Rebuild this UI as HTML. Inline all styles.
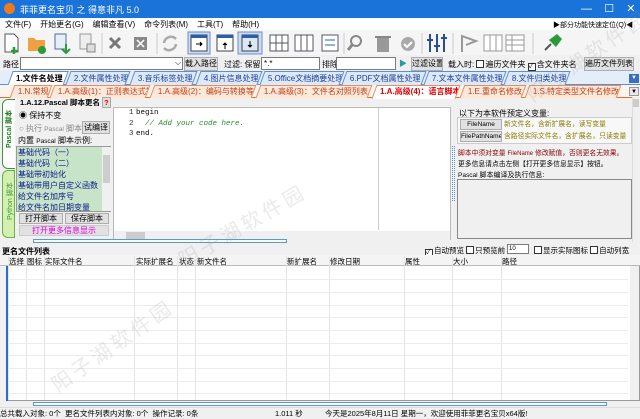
<!DOCTYPE html>
<html><head><meta charset="utf-8">
<style>
*{margin:0;padding:0;box-sizing:border-box}
body{width:640px;height:419px;overflow:hidden;background:#f0f0f0;font-family:"Liberation Sans","Noto Sans CJK SC",sans-serif;font-size:8px;color:#000;position:relative}
div,span{white-space:nowrap}
.a{position:absolute;white-space:nowrap}
.btn{position:absolute;background:#e1e1e1;border:1px solid #adadad;text-align:center;line-height:12px;font-size:8px;overflow:hidden}
.inp{position:absolute;background:#fff;border:1px solid #7a7a7a}
.cb{display:inline-block;width:8px;height:8px;border:1px solid #333;background:#fff;vertical-align:-1px;margin-right:1px;font-size:7px;line-height:6px}
.t1{position:absolute;top:71px;height:14px;border:1px solid #5a8fd0;border-bottom:none;background:#dbe9fb;color:#1f3f8f;font-size:8px;line-height:13px;padding-left:5px;transform:skewX(-20deg);overflow:hidden}
.t1 span{display:inline-block;transform:skewX(20deg)}
.t2{position:absolute;top:85px;height:13px;border:1px solid #e09060;border-bottom:none;background:#fde8dc;color:#c04010;font-size:8px;line-height:12px;padding-left:5px;transform:skewX(-20deg);overflow:hidden}
.t2 span{display:inline-block;transform:skewX(20deg)}
.vl{position:absolute;top:256px;width:1px;height:144px;background:#e4e4e4}
.hl{position:absolute;left:8px;width:620px;height:1px;background:#ececec}
</style></head><body>
<div class="a" style="left:0;top:0;width:640px;height:18px;background:#1a73d9"></div>
<div class="a" style="left:4px;top:3px;width:11px;height:11px;border-radius:50%;background:#f07a1a"></div>
<div class="a" style="left:20px;top:3px;color:#fff;font-size:9px">菲菲更名宝贝 之 得意非凡 5.0</div>
<div class="a" style="left:581px;top:2px;color:#fff;font-size:11px">—&nbsp;&nbsp;&nbsp;&nbsp;☐&nbsp;&nbsp;&nbsp;&nbsp;✕</div>
<div class="a" style="left:0;top:18px;width:640px;height:12px;background:#fff"></div>
<div class="a" style="left:5px;top:19px;font-size:8px">文件(F)&nbsp;&nbsp;&nbsp;&nbsp;开始更名(G)&nbsp;&nbsp;&nbsp;&nbsp;编辑查看(V)&nbsp;&nbsp;&nbsp;&nbsp;命令列表(M)&nbsp;&nbsp;&nbsp;&nbsp;工具(T)&nbsp;&nbsp;&nbsp;&nbsp;帮助(H)</div>
<div class="a" style="left:553px;top:20px;font-size:7px">▶部分功能快速定位(Q)◀</div>
<div class="a" style="left:0;top:30px;width:640px;height:25px;background:#f5f5f5"></div>
<svg class="a" style="left:0;top:30px" width="640" height="26">
<path d="M5 4h9l4 4v14H5z" fill="#fff" stroke="#555"/><path d="M14 17v7M11 21h7" stroke="#2a9a3a" stroke-width="2.5"/>
<path d="M28 8h6l2 2h9v11H28z" fill="#f0a040"/><circle cx="42" cy="20" r="4" fill="#2a9a3a"/>
<rect x="55" y="4" width="11" height="15" fill="#e8eef6" stroke="#4870a0"/><path d="M66 14v8M62 19l4 4 4-4" stroke="#2a9a3a" stroke-width="2" fill="none"/>
<rect x="80" y="4" width="11" height="15" fill="#eee" stroke="#999"/><rect x="87" y="14" width="8" height="8" fill="#ddd" stroke="#888"/>
<line x1="102" y1="3" x2="102" y2="24" stroke="#ccc"/>
<path d="M110 8l10 10M120 8l-10 10" stroke="#777" stroke-width="3"/>
<rect x="134" y="7" width="13" height="13" fill="#888"/><path d="M137 10l7 7M144 10l-7 7" stroke="#fff" stroke-width="1.5"/>
<line x1="157" y1="3" x2="157" y2="24" stroke="#ccc"/>
<path d="M164 13a7 7 0 0 1 12-4M176 14a7 7 0 0 1-12 4" stroke="#aaa" stroke-width="2.5" fill="none"/>
<rect x="188" y="2" width="22" height="22" fill="#c9dcf3" stroke="#6a8fc8"/><rect x="191" y="5" width="16" height="16" fill="#fff" stroke="#444"/><rect x="191" y="5" width="16" height="3" fill="#2a5fb0"/><path d="M196 14h6M200 12l2 2-2 2" stroke="#000"/>
<rect x="217" y="5" width="16" height="16" fill="#fff" stroke="#444"/><rect x="217" y="5" width="16" height="3" fill="#2a5fb0"/><path d="M225 19v-6M223 15l2-2 2 2" stroke="#000"/>
<rect x="238" y="2" width="24" height="22" fill="#c9dcf3" stroke="#6a8fc8"/><rect x="242" y="5" width="16" height="16" fill="#dde8f5" stroke="#444"/><rect x="242" y="5" width="16" height="3" fill="#2a5fb0"/><path d="M250 11v6M248 15l2 2 2-2" stroke="#000"/>
<rect x="270" y="5" width="18" height="16" fill="#fff" stroke="#556"/><path d="M276 5v16M282 5v16M270 13h18" stroke="#556"/>
<rect x="295" y="5" width="18" height="16" fill="#fff" stroke="#556"/><path d="M301 5v16M307 5v16" stroke="#556"/>
<rect x="322" y="5" width="16" height="16" fill="#fff" stroke="#556"/><path d="M325 10h10M325 15h10" stroke="#2a5fb0"/>
<line x1="344" y1="3" x2="344" y2="24" stroke="#ccc"/>
<circle cx="356" cy="11" r="5" fill="none" stroke="#888" stroke-width="2"/><path d="M352 15l-4 5" stroke="#888" stroke-width="3"/>
<rect x="377" y="8" width="12" height="14" fill="#999"/><rect x="375" y="6" width="16" height="2" fill="#888"/>
<circle cx="408" cy="14" r="7" fill="#aaa"/><path d="M404 14l3 3 5-5" stroke="#fff" stroke-width="2" fill="none"/>
<line x1="422" y1="3" x2="422" y2="24" stroke="#ccc"/>
<path d="M430 4v18M437 4v18M444 4v18" stroke="#2a4f90" stroke-width="2"/><path d="M427 10h6M434 16h6M441 8h6" stroke="#2a4f90" stroke-width="2"/>
<line x1="453" y1="3" x2="453" y2="24" stroke="#ccc"/>
<path d="M462 22V6l14 5-10 4" stroke="#999" stroke-width="2" fill="none"/>
<rect x="484" y="5" width="18" height="16" fill="#fff" stroke="#999"/><path d="M490 5v16M496 5v16" stroke="#999"/>
<rect x="506" y="5" width="18" height="16" fill="#fff" stroke="#999"/><path d="M506 10h18M506 15h18M512 5v16" stroke="#999"/>
<line x1="533" y1="3" x2="533" y2="24" stroke="#ccc"/>
<path d="M545 20l6-6" stroke="#555" stroke-width="2"/><path d="M549 10l8-6 5 5-6 8z" fill="#2a9a3a"/>
</svg>
<div class="a" style="left:3px;top:59px">路径</div>
<div class="inp" style="left:20px;top:57px;width:163px;height:13px"></div>
<div class="a" style="left:175px;top:58px;font-size:8px">⌵</div>
<div class="btn" style="left:184px;top:57px;width:34px;height:14px">载入路径</div>
<div class="a" style="left:224px;top:59px">过滤: 保留</div>
<div class="inp" style="left:261px;top:57px;width:59px;height:13px;padding-left:2px;line-height:11px">*.*</div>
<div class="a" style="left:322px;top:59px">排除</div>
<div class="inp" style="left:336px;top:57px;width:60px;height:13px"></div>
<div class="a" style="left:399px;top:58px;color:#2a9aa0">▶</div>
<div class="btn" style="left:411px;top:57px;width:32px;height:14px">过滤设置</div>
<div class="a" style="left:448px;top:59px">载入时: <span class="cb"></span>遍历文件夹 <span class="cb">✓</span>含文件夹名</div>
<div class="btn" style="left:584px;top:57px;width:50px;height:14px">遍历文件列表</div>
<div class="a" style="left:0;top:71px;width:640px;height:14px;background:#e4eefa;border-bottom:1px solid #5a8fd0"></div>
<div class="t1" style="left:68px;width:60px"><span>2.文件属性处理</span></div>
<div class="t1" style="left:132px;width:63px"><span>3.音乐标签处理</span></div>
<div class="t1" style="left:198px;width:62px"><span>4.图片信息处理</span></div>
<div class="t1" style="left:262px;width:80px"><span>5.Office文档摘要处理</span></div>
<div class="t1" style="left:344px;width:80px"><span>6.PDF文档属性处理</span></div>
<div class="t1" style="left:426px;width:78px"><span>7.文本文件属性处理</span></div>
<div class="t1" style="left:506px;width:62px"><span>8.文件归类处理</span></div>
<div class="t1" style="left:10px;width:56px;background:#fff;height:15px;color:#000;font-weight:bold"><span>1.文件名处理</span></div>
<div class="a" style="left:629px;top:74px;width:10px;height:9px;background:#3a6fc0;color:#fff;font-size:6px;text-align:center;line-height:9px">▼</div>
<div class="a" style="left:0;top:85px;width:640px;height:13px;background:#fdf2ec;border-bottom:1px solid #e07030"></div>
<div class="t2" style="left:12px;width:38px"><span>1.N.常规</span></div>
<div class="t2" style="left:52px;width:96px"><span>1.A.高级(1)：正则表达式等</span></div>
<div class="t2" style="left:152px;width:102px"><span>1.A.高级(2)：编码与转换等</span></div>
<div class="t2" style="left:258px;width:112px"><span>1.A.高级(3)：文件名对照列表</span></div>
<div class="t2" style="left:462px;width:62px"><span>1.E.重命名修改</span></div>
<div class="t2" style="left:527px;width:92px"><span>1.S.特定类型文件名修改</span></div>
<div class="t2" style="left:374px;width:84px;background:#fff;color:#e00000;font-weight:bold;height:14px"><span>1.A.高级(4)：语言脚本</span></div>
<div class="a" style="left:629px;top:87px;width:10px;height:9px;background:#e8e8e8;border:1px solid #999;font-size:6px;text-align:center;line-height:8px">▼</div>
<div class="a" style="left:2px;top:99px;width:13px;height:70px;background:#fff;border:1px solid #3a9a3a;border-right:none;border-radius:6px 0 0 6px"></div>
<div class="a" style="left:2px;top:170px;width:13px;height:68px;background:#d4f0b0;border:1px solid #6ab04a;border-radius:6px 0 0 6px"></div>
<div class="a" style="left:4px;top:148px;transform:rotate(-90deg);transform-origin:0 0;color:#1a7a1a;font-weight:bold;font-size:7px">Pascal 脚本</div>
<div class="a" style="left:5px;top:220px;transform:rotate(-90deg);transform-origin:0 0;color:#3a9a3a;font-size:7px">Python 脚本</div>
<div class="a" style="left:20px;top:97px;font-weight:bold;font-size:7.5px">1.A.12.Pascal 脚本更名 <span style="background:#ddd;color:#e00;border:1px solid #aaa;padding:0 1px">?</span></div>
<div class="a" style="left:19px;top:110px">◉ 保持不变</div>
<div class="a" style="left:19px;top:123px;color:#888">○ 执行 <span style="font-size:6.5px">Pascal</span> 脚本</div>
<div class="btn" style="left:82px;top:121px;width:28px;height:13px">试编译</div>
<div class="a" style="left:18px;top:135px">内置 <span style="font-size:6.5px">Pascal</span> 脚本示例:</div>
<div class="a" style="left:16px;top:146px;width:95px;height:66px;background:#c8e4c8;border:1px solid #999"></div>
<div class="a" style="left:102px;top:147px;width:9px;height:64px;background:#f0f0f0"></div>
<div class="a" style="left:103px;top:155px;width:7px;height:28px;background:#cdcdcd"></div>
<div class="a" style="left:18px;top:147px;color:#0a1a8a;line-height:11px;font-size:8px">基础代码（一）<br>基础代码（二）<br>基础带初始化<br>基础带用户自定义函数<br>给文件名加序号<br>给文件名加日期变量</div>
<div class="btn" style="left:19px;top:213px;width:44px;height:11px;line-height:9px">打开脚本</div>
<div class="btn" style="left:65px;top:213px;width:44px;height:11px;line-height:9px">保存脚本</div>
<div class="btn" style="left:19px;top:225px;width:90px;height:11px;line-height:9px;color:#e000e0;border-color:#ccc">打开更多信息显示</div>
<div class="a" style="left:113px;top:107px;width:338px;height:133px;background:#fff;border:1px solid #bbb"></div>
<div class="a" style="left:378px;top:108px;width:1px;height:122px;background:#ccc"></div>
<div class="a" style="left:114px;top:231px;width:336px;height:9px;background:#f0f0f0"></div>
<div class="a" style="left:126px;top:232px;width:19px;height:7px;background:#cdcdcd"></div>
<div class="a" style="left:129px;top:108px;font-family:'Liberation Mono',monospace;font-size:7.5px;line-height:10.5px;color:#333">1<br>2<br>3</div>
<div class="a" style="left:136px;top:108px;font-family:'Liberation Mono',monospace;font-size:7.5px;line-height:10.5px">begin<br>&nbsp;&nbsp;<span style="color:#2a8a2a;font-style:italic">// Add your code here.</span><br>end.</div>
<div class="a" style="left:459px;top:108px">以下为本软件预定义变量:</div>
<div class="a" style="left:457px;top:117px;width:175px;height:27px;background:#f8f8f8;border:1px solid #ccc"></div>
<div class="btn" style="left:460px;top:119px;width:42px;height:11px;line-height:9px;font-size:6.5px">FileName</div>
<div class="btn" style="left:460px;top:131px;width:42px;height:11px;line-height:9px;font-size:6.5px">FilePathName</div>
<div class="a" style="left:504px;top:119px;color:#8a7a00;line-height:12px;font-size:6.8px">新文件名，含新扩展名，读写变量<br>含路径实际文件名，含扩展名，只读变量</div>
<div class="a" style="left:458px;top:147px;color:#8a0000;font-size:6.8px">脚本中须对变量 <span style="font-size:6px">FileName</span> 修改赋值，否则更名无效果。</div>
<div class="a" style="left:458px;top:158px;font-size:6.8px">更多信息请点击左侧【打开更多信息显示】按钮。</div>
<div class="a" style="left:458px;top:170px;font-size:7px"><span style="font-size:6.5px">Pascal</span> 脚本编译及执行信息:</div>
<div class="a" style="left:457px;top:179px;width:175px;height:60px;background:#f0f0f0;border:1px solid #888"></div>
<div class="a" style="left:452px;top:146px;width:3px;height:55px;border:1px dotted #5a8fd0"></div>
<div class="a" style="left:632px;top:97px;width:8px;height:145px;background:#f0f0f0;border-left:1px solid #ddd"></div>
<div class="a" style="left:633px;top:99px;width:6px;height:8px;background:#ccc"></div>
<div class="a" style="left:33px;top:239px;width:254px;height:4px;border:1px solid #5a9ad0;background:#f4fbe8"></div>
<div class="a" style="left:2px;top:246px;font-weight:bold">更名文件列表</div>
<div class="a" style="left:425px;top:245px;font-size:7.5px"><span class="cb">✓</span>自动预览 <span class="cb"></span>只预览前</div>
<div class="inp" style="left:507px;top:244px;width:22px;height:10px;font-size:6px;line-height:8px;padding-left:1px">10</div>
<div class="a" style="left:534px;top:245px;font-size:7.5px"><span class="cb"></span>显示实际图标 <span class="cb"></span>自动列宽</div>
<div class="a" style="left:0;top:255px;width:640px;height:146px;background:#fff;border:1px solid #999"></div>
<div class="a" style="left:0;top:255px;width:640px;height:11px;background:#f4f4f4;border-bottom:1px solid #bbb"></div>
<div class="a" style="left:0;top:266px;width:8px;height:135px;background:#f0f0f0;border-right:2px solid #2a6fc0"></div>
<div class="a" style="left:9px;top:256px;font-size:7.5px">选择</div>
<div class="a" style="left:27px;top:256px;font-size:7.5px">图标</div>
<div class="a" style="left:45px;top:256px;font-size:7.5px">实际文件名</div>
<div class="a" style="left:136px;top:256px;font-size:7.5px">实际扩展名</div>
<div class="a" style="left:179px;top:256px;font-size:7.5px">状态</div>
<div class="a" style="left:197px;top:256px;font-size:7.5px">新文件名</div>
<div class="a" style="left:287px;top:256px;font-size:7.5px">新扩展名</div>
<div class="a" style="left:330px;top:256px;font-size:7.5px">修改日期</div>
<div class="a" style="left:405px;top:256px;font-size:7.5px">属性</div>
<div class="a" style="left:453px;top:256px;font-size:7.5px">大小</div>
<div class="a" style="left:502px;top:256px;font-size:7.5px">路径</div>
<div class="vl" style="left:8px"></div><div class="vl" style="left:26px"></div><div class="vl" style="left:44px"></div><div class="vl" style="left:134px"></div><div class="vl" style="left:177px"></div><div class="vl" style="left:195px"></div><div class="vl" style="left:286px"></div><div class="vl" style="left:329px"></div><div class="vl" style="left:404px"></div><div class="vl" style="left:452px"></div><div class="vl" style="left:501px"></div>
<div class="hl" style="top:279px"></div><div class="hl" style="top:292px"></div><div class="hl" style="top:305px"></div><div class="hl" style="top:317px"></div><div class="hl" style="top:330px"></div><div class="hl" style="top:343px"></div><div class="hl" style="top:355px"></div><div class="hl" style="top:368px"></div><div class="hl" style="top:381px"></div><div class="hl" style="top:393px"></div>
<div class="a" style="left:630px;top:266px;width:9px;height:134px;background:#f0f0f0"></div>
<div class="a" style="left:33px;top:402px;width:574px;height:4px;border:1px solid #5a9ad0;background:#f4fbe8"></div>
<div class="a" style="left:0;top:407px;width:640px;height:12px;background:#f0f0f0;border-top:1px solid #ddd"></div>
<div class="a" style="left:0;top:408px;font-size:7.5px">总共载入对象: 0个&nbsp;&nbsp;更名文件列表内对象: 0个&nbsp;&nbsp;操作记录: 0条</div>
<div class="a" style="left:275px;top:408px;font-size:7.5px">1.011 秒</div>
<div class="a" style="left:325px;top:408px;font-size:7.5px">今天是2025年8月11日 星期一，欢迎使用菲菲更名宝贝x64版!</div>
<div class="a" style="left:40px;top:330px;transform:rotate(-35deg);color:rgba(150,150,150,.2);font-size:20px;letter-spacing:4px">阳子湖软件园</div>
<div class="a" style="left:170px;top:210px;transform:rotate(-30deg);color:rgba(150,150,150,.2);font-size:20px;letter-spacing:4px">阳子湖软件园</div>
<div class="a" style="left:515px;top:40px;transform:rotate(-35deg);color:rgba(150,150,150,.2);font-size:20px;letter-spacing:4px">阳子湖软件园</div>
</body></html>
